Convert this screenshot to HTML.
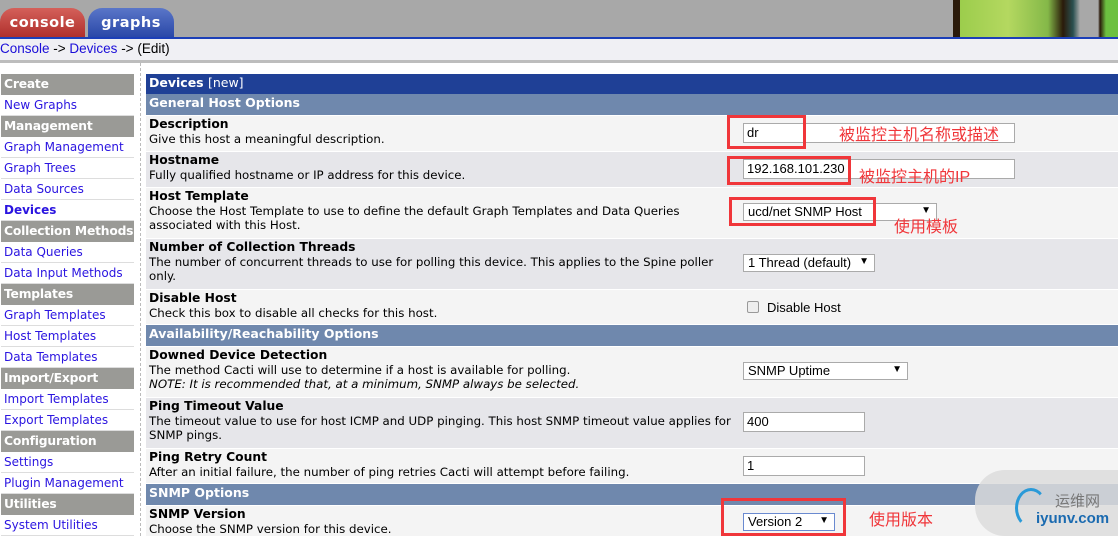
<!DOCTYPE html>
<html><head><meta charset="utf-8"><style>
*{margin:0;padding:0;box-sizing:border-box}
body{width:1118px;height:536px;overflow:hidden;background:#fff;position:relative;font-family:"DejaVu Sans","Liberation Sans",sans-serif;font-size:11.8px;color:#000}
.abs{position:absolute}
#top{left:0;top:0;width:1118px;height:37px;background:#a8a8a8}
#blue{left:0;top:37px;width:1118px;height:2px;background:#1c3fb8}
.tab{position:absolute;top:8px;height:29px;border-radius:14px 14px 0 0;color:#fff;font-weight:bold;font-size:14.5px;text-align:center;padding-top:7px;letter-spacing:.5px}
#crumb{left:0;top:39px;width:1118px;height:21px;background:#f0f0f4;font-size:13.5px;padding:2px 0 0 0;font-family:"Liberation Sans",sans-serif}
#crumb a{color:#1a0dd8;text-decoration:none}
#crumbline{left:0;top:60px;width:1118px;height:3px;background:#bdbdbd}
.sh{position:absolute;left:1px;width:133px;height:21px;background:#9a9a96;color:#fff;font-weight:bold;font-size:12.3px;padding:3px 0 0 3px;letter-spacing:-.2px;white-space:nowrap;overflow:hidden}
.sl{position:absolute;left:1px;width:133px;height:21px;color:#2a14e0;font-size:12px;padding:3px 0 0 3px;border-bottom:1px solid #ddd;white-space:nowrap}
#vline{left:140px;top:63px;width:1px;height:473px;border-left:1px dashed #bbb}
.row{position:absolute;left:146px;width:972px;padding:1px 0 0 3px;line-height:14.5px;white-space:nowrap}
.row b{font-size:12.3px}
.h1{background:#1f4096;color:#fff;font-weight:bold;font-size:12.5px;padding:2px 0 0 3px}
.h2{background:#6f88ad;color:#fff;font-weight:bold;font-size:12.5px;padding:2px 0 0 3px}
.a{background:#e6e6ea}.b{background:#f4f4f4}
.inp{position:absolute;height:20px;border:1px solid #aaa;background:#fff;font-family:"Liberation Sans",sans-serif;font-size:13px;padding:1px 3px}
.sel{position:absolute;height:18px;border:1px solid #aaa;background:#fff;font-family:"Liberation Sans",sans-serif;font-size:13px;padding:0 4px}
.sel i{position:absolute;right:5px;top:1px;font-style:normal;font-size:10px}
.red{position:absolute;border:3px solid #f0363a}
.cn{position:absolute;color:#f0363a;font-family:"Liberation Sans","Noto Sans CJK SC",sans-serif;font-size:16px}
</style></head><body>
<div id="top" class="abs"></div>
<div class="abs" style="left:948px;top:0;width:170px;height:37px;background:linear-gradient(90deg,#a8a8a8 0,#a8a8a8 5px,#2a1a0a 5px,#2a1a0a 12px,#9ccd4c 12px,#b4d860 60px,#84b848 100px,#2a1a0a 115px,#2a5050 125px,#a8a8a8 132px,#a8a8a8 150px,#2a1a0a 152px,#6cc040 158px)"></div>
<div class="tab" style="left:0;width:85px;background:linear-gradient(#d4605a,#b0302c)">console</div>
<div class="tab" style="left:88px;width:86px;background:linear-gradient(#5a76c8,#2a48a8)">graphs</div>
<div id="blue" class="abs"></div>
<div id="crumb" class="abs"><a>Console</a> -&gt; <a>Devices</a> -&gt; (Edit)</div>
<div id="crumbline" class="abs"></div>
<div id="vline" class="abs"></div>

<div class="sh" style="top:74px">Create</div>
<div class="sl" style="top:95px">New Graphs</div>
<div class="sh" style="top:116px">Management</div>
<div class="sl" style="top:137px">Graph Management</div>
<div class="sl" style="top:158px">Graph Trees</div>
<div class="sl" style="top:179px">Data Sources</div>
<div class="sl" style="top:200px;font-weight:bold">Devices</div>
<div class="sh" style="top:221px">Collection Methods</div>
<div class="sl" style="top:242px">Data Queries</div>
<div class="sl" style="top:263px">Data Input Methods</div>
<div class="sh" style="top:284px">Templates</div>
<div class="sl" style="top:305px">Graph Templates</div>
<div class="sl" style="top:326px">Host Templates</div>
<div class="sl" style="top:347px">Data Templates</div>
<div class="sh" style="top:368px">Import/Export</div>
<div class="sl" style="top:389px">Import Templates</div>
<div class="sl" style="top:410px">Export Templates</div>
<div class="sh" style="top:431px">Configuration</div>
<div class="sl" style="top:452px">Settings</div>
<div class="sl" style="top:473px">Plugin Management</div>
<div class="sh" style="top:494px">Utilities</div>
<div class="sl" style="top:515px">System Utilities</div>

<div class="row h1" style="top:74px;height:20px">Devices <span style="font-weight:normal">[new]</span></div>
<div class="row h2" style="top:94px;height:21px">General Host Options</div>
<div class="row b" style="top:116px;height:35px"><b>Description</b><br>Give this host a meaningful description.</div>
<div class="row a" style="top:152px;height:35px"><b>Hostname</b><br>Fully qualified hostname or IP address for this device.</div>
<div class="row b" style="top:188px;height:50px"><b>Host Template</b><br>Choose the Host Template to use to define the default Graph Templates and Data Queries<br>associated with this Host.</div>
<div class="row a" style="top:239px;height:50px"><b>Number of Collection Threads</b><br>The number of concurrent threads to use for polling this device. This applies to the Spine poller<br>only.</div>
<div class="row b" style="top:290px;height:34px"><b>Disable Host</b><br>Check this box to disable all checks for this host.</div>
<div class="row h2" style="top:325px;height:21px">Availability/Reachability Options</div>
<div class="row b" style="top:347px;height:50px"><b>Downed Device Detection</b><br>The method Cacti will use to determine if a host is available for polling.<br><i>NOTE: It is recommended that, at a minimum, SNMP always be selected.</i></div>
<div class="row a" style="top:398px;height:50px"><b>Ping Timeout Value</b><br>The timeout value to use for host ICMP and UDP pinging. This host SNMP timeout value applies for<br>SNMP pings.</div>
<div class="row b" style="top:449px;height:34px"><b>Ping Retry Count</b><br>After an initial failure, the number of ping retries Cacti will attempt before failing.</div>
<div class="row h2" style="top:484px;height:21px">SNMP Options</div>
<div class="row b" style="top:506px;height:30px"><b>SNMP Version</b><br>Choose the SNMP version for this device.</div>

<div class="inp" style="left:743px;top:123px;width:272px">dr</div>
<div class="inp" style="left:743px;top:159px;width:272px">192.168.101.230</div>
<div class="sel" style="left:743px;top:203px;width:194px">ucd/net SNMP Host<i>▼</i></div>
<div class="sel" style="left:743px;top:254px;width:132px">1 Thread (default)<i>▼</i></div>
<div class="abs" style="left:747px;top:301px;width:12px;height:12px;border:1px solid #999;border-radius:2px;background:#eee"></div>
<div class="abs" style="left:767px;top:300px;font-family:'Liberation Sans',sans-serif;font-size:13px">Disable Host</div>
<div class="sel" style="left:743px;top:362px;width:165px">SNMP Uptime<i>▼</i></div>
<div class="inp" style="left:743px;top:412px;width:122px">400</div>
<div class="inp" style="left:743px;top:456px;width:122px">1</div>
<div class="sel" style="left:743px;top:513px;width:92px;border-color:#6a8ad0">Version 2<i>▼</i></div>

<div class="red" style="left:727px;top:115px;width:79px;height:34px"></div>
<div class="red" style="left:727px;top:156px;width:124px;height:29px"></div>
<div class="red" style="left:729px;top:197px;width:147px;height:29px"></div>
<div class="red" style="left:721px;top:498px;width:125px;height:38px"></div>
<div class="cn" style="left:839px;top:121px">被监控主机名称或描述</div>
<div class="cn" style="left:859px;top:163px">被监控主机的IP</div>
<div class="cn" style="left:894px;top:213px">使用模板</div>
<div class="cn" style="left:869px;top:506px">使用版本</div>

<div class="abs" style="left:975px;top:470px;width:143px;height:66px;background:#dcdcdc;opacity:.85;border-radius:30px 0 0 30px"></div>
<div class="abs" style="left:1015px;top:488px;width:32px;height:40px;border:3px solid #2a9ad8;border-radius:50%;border-right-color:transparent;border-bottom-color:transparent"></div>
<div class="abs" style="left:1055px;top:490px;color:#777;font-family:'Liberation Sans','Noto Sans CJK SC',sans-serif;font-size:15px">运维网</div>
<div class="abs" style="left:1036px;top:510px;color:#1a6ab0;font-family:'Liberation Sans',sans-serif;font-weight:bold;font-size:15px">iyunv.com</div>
</body></html>
